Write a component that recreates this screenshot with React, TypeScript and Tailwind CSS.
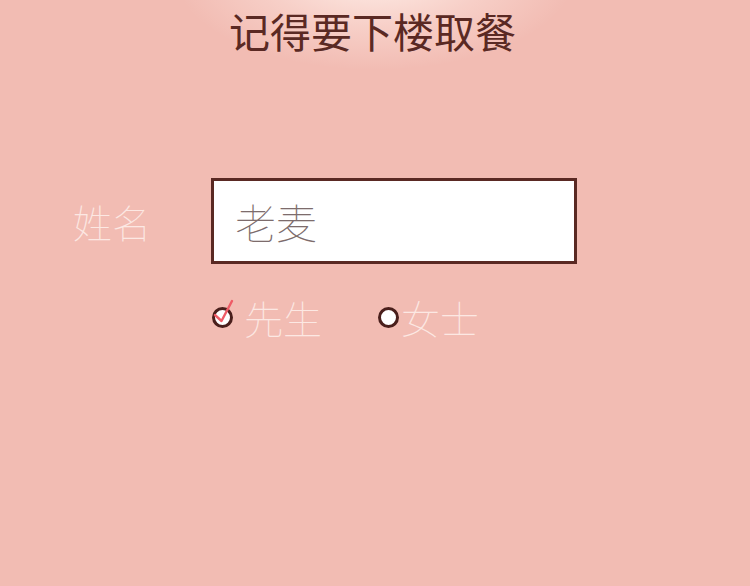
import { useState } from "react";

const cjk = "font-['Noto_Sans_CJK_SC','Noto_Sans',sans-serif]";

function Radio({ checked }: { checked: boolean }) {
    return (
        <span className="relative w-[21px] h-[21px] shrink-0">
            <span className="absolute inset-0 rounded-full border-[3px] border-[#4a1f1c] bg-white" />
            {checked && (
                <svg viewBox="0 0 24 26" className="absolute left-[0px] top-[-9px] w-[24px] h-[26px]">
                    <path d="M3 17 L9.5 23 L20 3" fill="none" stroke="#ef5b66" strokeWidth="2.4" strokeLinecap="round" strokeLinejoin="round" />
                </svg>
            )}
        </span>
    );
}

export default function App() {
    const [gender, setGender] = useState<"m" | "f">("m");

    return (
        <main className={`relative w-[750px] h-[586px] overflow-hidden bg-[#f2bcb3] ${cjk}`}>
            <div className="absolute left-[175px] top-[-120px] w-[400px] h-[190px] rounded-full bg-[radial-gradient(closest-side,rgba(255,240,234,0.95),rgba(255,236,230,0.4)_55%,rgba(242,188,179,0))]" />

            <h1 className="relative pt-[3px] pr-[5px] text-center text-[41px] leading-[54px] font-normal text-[#5a2923]">
                记得要下楼取餐
            </h1>

            <div className="relative mt-[121px] flex items-center">
                <span className="w-[211px] pl-[73px] text-[39px] leading-none font-thin text-[#fce8e3]">姓名</span>
                <div className="w-[366px] h-[86px] border-[3px] border-[#5a2923] bg-white flex items-center pl-[21px]">
                    <span className="text-[41px] leading-none font-thin text-[#7d6c6c]">老麦</span>
                </div>
            </div>

            <div className="relative mt-[34px] ml-[212px] flex items-center">
                <button onClick={() => setGender("m")} className="flex items-center gap-[11px]">
                    <Radio checked={gender === "m"} />
                    <span className="text-[39px] leading-none font-thin text-[#fce8e3]">先生</span>
                </button>
                <button onClick={() => setGender("f")} className="ml-[56px] flex items-center gap-[2px]">
                    <Radio checked={gender === "f"} />
                    <span className="text-[39px] leading-none font-thin text-[#fce8e3]">女士</span>
                </button>
            </div>
        </main>
    );
}
